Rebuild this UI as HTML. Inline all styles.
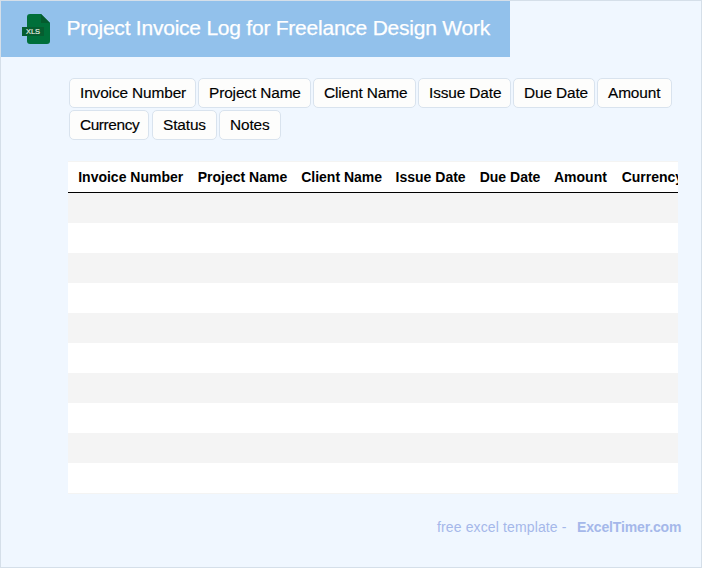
<!DOCTYPE html>
<html>
<head>
<meta charset="utf-8">
<style>
html,body{margin:0;padding:0;}
body{width:702px;height:568px;overflow:hidden;position:relative;background:#f0f7ff;font-family:"Liberation Sans",sans-serif;}
.frame{position:absolute;left:0;top:0;width:700px;height:566px;border:1px solid #d5dfe9;}
.hdr{position:absolute;left:1px;top:1px;width:509px;height:56px;background:#92c1eb;}
.title{position:absolute;left:65.5px;top:14.6px;font-size:21px;letter-spacing:-0.23px;line-height:24px;color:#fff;-webkit-text-stroke:0.25px #fff;white-space:nowrap;}
.icon{position:absolute;left:22px;top:14px;width:28px;height:30px;}
.btn{position:absolute;box-sizing:border-box;height:30px;border:1px solid #d9e3ee;border-radius:5px;background:#fdfdfc;font-size:15.4px;letter-spacing:-0.12px;line-height:28px;color:#000;-webkit-text-stroke:0.15px #000;text-align:left;padding-left:10px;white-space:nowrap;}
.tbl{position:absolute;left:68px;top:162px;width:610px;height:331px;background:#fff;overflow:hidden;}
.th{position:absolute;top:0;height:30px;width:100%;border-bottom:1px solid #000;}
.th span{position:absolute;top:7px;font-size:14px;line-height:16px;font-weight:bold;color:#000;white-space:nowrap;}
.row{position:absolute;left:0;width:610px;height:30px;}
.g{background:#f4f4f4;}
.tline{position:absolute;left:68px;width:610px;height:1px;background:#f4f4f3;}
.foot{position:absolute;top:519px;font-size:14px;line-height:16px;color:#a5b8ea;white-space:nowrap;}
</style>
</head>
<body>
<div class="frame"></div>
<div class="hdr">
  <svg class="icon" viewBox="0 0 28 30" style="left:21px;top:13px;">
    <path d="M8 0 H19 L28 9 V27 A3 3 0 0 1 25 30 H8 A3 3 0 0 1 5 27 V3 A3 3 0 0 1 8 0 Z" fill="#006f3a"/>
    <path d="M19 0 V9 H28 Z" fill="#045b2e"/>
    <rect x="0" y="13" width="22" height="9" fill="#065d30"/>
    <text x="4" y="20" font-family="Liberation Sans" font-size="7.8" fill="#e6ede3" stroke="#e6ede3" stroke-width="0.2" textLength="14" lengthAdjust="spacingAndGlyphs">XLS</text>
  </svg>
  <div class="title">Project Invoice Log for Freelance Design Work</div>
</div>

<div class="btn" style="left:69px;top:78px;width:127px;">Invoice Number</div>
<div class="btn" style="left:198px;top:78px;width:113px;">Project Name</div>
<div class="btn" style="left:313px;top:78px;width:103px;">Client Name</div>
<div class="btn" style="left:418px;top:78px;width:93px;">Issue Date</div>
<div class="btn" style="left:513px;top:78px;width:82px;">Due Date</div>
<div class="btn" style="left:597px;top:78px;width:75px;">Amount</div>
<div class="btn" style="left:69px;top:110px;width:80px;letter-spacing:-0.4px;">Currency</div>
<div class="btn" style="left:152px;top:110px;width:65px;">Status</div>
<div class="btn" style="left:219px;top:110px;width:62px;">Notes</div>

<div class="tline" style="top:161px"></div>
<div class="tline" style="top:493px"></div>
<div class="tbl">
  <div class="th">
    <span style="left:10.2px">Invoice Number</span>
    <span style="left:129.7px">Project Name</span>
    <span style="left:233.2px">Client Name</span>
    <span style="left:327.6px">Issue Date</span>
    <span style="left:411.7px">Due Date</span>
    <span style="left:486.0px">Amount</span>
    <span style="left:553.7px">Currency</span>
  </div>
  <div class="row g" style="top:31px"></div>
  <div class="row" style="top:61px"></div>
  <div class="row g" style="top:91px"></div>
  <div class="row" style="top:121px"></div>
  <div class="row g" style="top:151px"></div>
  <div class="row" style="top:181px"></div>
  <div class="row g" style="top:211px"></div>
  <div class="row" style="top:241px"></div>
  <div class="row g" style="top:271px"></div>
  <div class="row" style="top:301px"></div>
</div>

<div class="foot" style="left:437px;letter-spacing:0.13px;">free excel template - </div>
<div class="foot" style="left:577px;font-weight:bold;letter-spacing:-0.15px;">ExcelTimer.com</div>
</body>
</html>
